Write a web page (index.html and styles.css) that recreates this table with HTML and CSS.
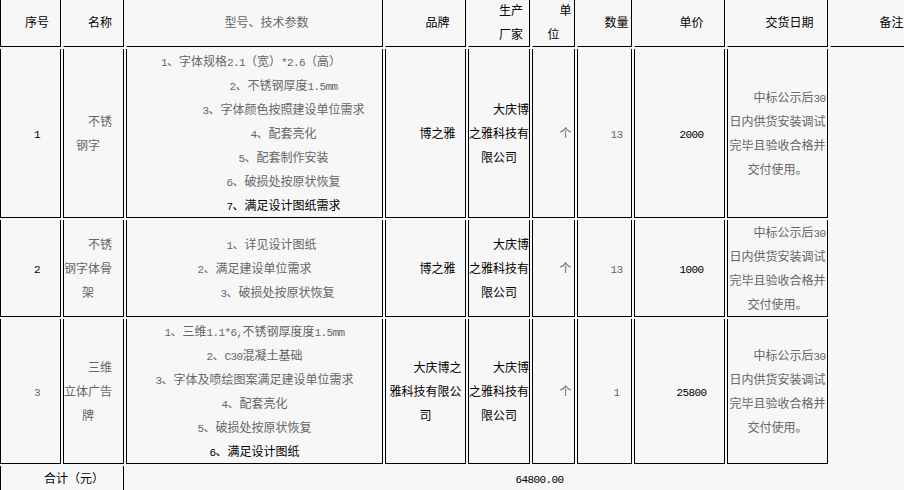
FILE: index.html
```html
<!DOCTYPE html>
<html lang="zh-CN">
<head>
<meta charset="utf-8">
<title>报价明细</title>
<link rel="stylesheet" href="styles.css">
</head>
<body>
<div class="t">
  <!-- header -->
  <div class="c h f0 n"><div class="l i k">序号</div></div>
  <div class="c h n"><div class="l i k">名称</div></div>
  <div class="c h"><div class="l i g">型号、技术参数</div></div>
  <div class="c h"><div class="l i k">品牌</div></div>
  <div class="c h pr6"><div class="l r k">生产</div><div class="l r k">厂家</div></div>
  <div class="c h"><div class="l i k">单</div><div class="l k">位</div></div>
  <div class="c h"><div class="l i k">数量</div></div>
  <div class="c h"><div class="l i k">单价</div></div>
  <div class="c h"><div class="l i k">交货日期</div></div>
  <div class="c h"><div class="l i k">备注</div></div>

  <!-- row 1 -->
  <div class="c n"><div class="l i k"><span class="m">1</span></div></div>
  <div class="c n g"><div class="l i">不锈</div><div class="l">钢字</div></div>
  <div class="c g">
    <div class="l u7"><span class="m">1</span>、字体规格<span class="m">2.1</span>（宽）<span class="m">*2.6</span>（高）</div>
    <div class="l o58"><span class="m">2</span>、不锈钢厚度<span class="m">1.5mm</span></div>
    <div class="l o58"><span class="m">3</span>、字体颜色按照建设单位需求</div>
    <div class="l o58"><span class="m">4</span>、配套亮化</div>
    <div class="l o58"><span class="m">5</span>、配套制作安装</div>
    <div class="l o58"><span class="m">6</span>、破损处按原状恢复</div>
    <div class="l o58 k"><span class="m">7</span>、满足设计图纸需求</div>
  </div>
  <div class="c k"><div class="l i">博之雅</div></div>
  <div class="c k"><div class="l i">大庆博</div><div class="l">之雅科技有</div><div class="l">限公司</div></div>
  <div class="c g"><div class="l i">个</div></div>
  <div class="c g"><div class="l i"><span class="m">13</span></div></div>
  <div class="c k"><div class="l i"><span class="m">2000</span></div></div>
  <div class="c g">
    <div class="l i">中标公示后<span class="m">30</span></div>
    <div class="l">日内供货安装调试</div>
    <div class="l">完毕且验收合格并</div>
    <div class="l">交付使用。</div>
  </div>
  <div class="e"></div>

  <!-- row 2 -->
  <div class="c n"><div class="l i k"><span class="m">2</span></div></div>
  <div class="c n g"><div class="l i">不锈</div><div class="l">钢字体骨</div><div class="l">架</div></div>
  <div class="c g">
    <div class="l o34"><span class="m">1</span>、详见设计图纸</div>
    <div class="l"><span class="m">2</span>、满足建设单位需求</div>
    <div class="l o46"><span class="m">3</span>、破损处按原状恢复</div>
  </div>
  <div class="c k"><div class="l i">博之雅</div></div>
  <div class="c k"><div class="l i">大庆博</div><div class="l">之雅科技有</div><div class="l">限公司</div></div>
  <div class="c g"><div class="l i">个</div></div>
  <div class="c g"><div class="l i"><span class="m">13</span></div></div>
  <div class="c k"><div class="l i"><span class="m">1000</span></div></div>
  <div class="c g">
    <div class="l i">中标公示后<span class="m">30</span></div>
    <div class="l">日内供货安装调试</div>
    <div class="l">完毕且验收合格并</div>
    <div class="l">交付使用。</div>
  </div>
  <div class="e"></div>

  <!-- row 3 -->
  <div class="c n"><div class="l i g"><span class="m">3</span></div></div>
  <div class="c n g"><div class="l i">三维</div><div class="l">立体广告</div><div class="l">牌</div></div>
  <div class="c g">
    <div class="l"><span class="m">1</span>、三维<span class="m">1.1*6,</span>不锈钢厚度度<span class="m">1.5mm</span></div>
    <div class="l"><span class="m">2</span>、<span class="m">C30</span>混凝土基础</div>
    <div class="l"><span class="m">3</span>、字体及喷绘图案满足建设单位需求</div>
    <div class="l"><span class="m">4</span>、配套亮化</div>
    <div class="l"><span class="m">5</span>、破损处按原状恢复</div>
    <div class="l k"><span class="m">6</span>、满足设计图纸</div>
  </div>
  <div class="c k"><div class="l i">大庆博之</div><div class="l">雅科技有限公</div><div class="l">司</div></div>
  <div class="c k"><div class="l i">大庆博</div><div class="l">之雅科技有</div><div class="l">限公司</div></div>
  <div class="c g"><div class="l i">个</div></div>
  <div class="c g"><div class="l i"><span class="m">1</span></div></div>
  <div class="c k"><div class="l i"><span class="m">25800</span></div></div>
  <div class="c g">
    <div class="l i">中标公示后<span class="m">30</span></div>
    <div class="l">日内供货安装调试</div>
    <div class="l">完毕且验收合格并</div>
    <div class="l">交付使用。</div>
  </div>
  <div class="e"></div>

  <!-- footer -->
  <div class="c h f0 s2"><div class="l i k">合计（元）</div></div>
  <div class="c h s8"><div class="l i k"><span class="m">64800.00</span></div></div>
</div>
</body>
</html>
```

FILE: styles.css
```css
html, body {
  margin: 0;
  padding: 0;
  background: #f7f7f7;
  overflow: hidden;
}

body {
  font-family: "Noto Sans CJK SC", "Noto Sans", sans-serif;
  font-size: 12px;
  color: #000;
}

.t {
  display: grid;
  grid-template-columns: 61px 61px 257px 81px 62px 43px 55px 91px 101px 99px;
  gap: 2px;
  width: 929px;
  margin-top: -2px;
}

.c {
  box-sizing: border-box;
  display: flex;
  flex-direction: column;
  justify-content: center;
  min-width: 0;
  border-left: 1px solid #000;
  border-right: 1px solid #000;
  border-bottom: 1px solid #000;
}

.h {
  border-left-color: transparent;
}

.h.f0 {
  border-left-color: #000;
}

.n {
  padding-right: 11px;
}

.pr6 {
  padding-right: 6px;
}

.s2 {
  grid-column: span 2;
}

.s8 {
  grid-column: span 8;
}

.l {
  height: 24px;
  line-height: 24px;
  text-align: center;
  white-space: nowrap;
}

.i {
  text-indent: 24px;
}

.r {
  text-align: right;
}

.o58 {
  padding-left: 58px;
}

.o34 {
  padding-left: 34px;
}

.o46 {
  padding-left: 46px;
}

.u7 {
  padding-right: 7px;
}

.m {
  font-family: "Liberation Mono", monospace;
  font-size: 11px;
  letter-spacing: -0.6px;
}

.k {
  color: #000;
}

.g {
  color: #666;
}
```
